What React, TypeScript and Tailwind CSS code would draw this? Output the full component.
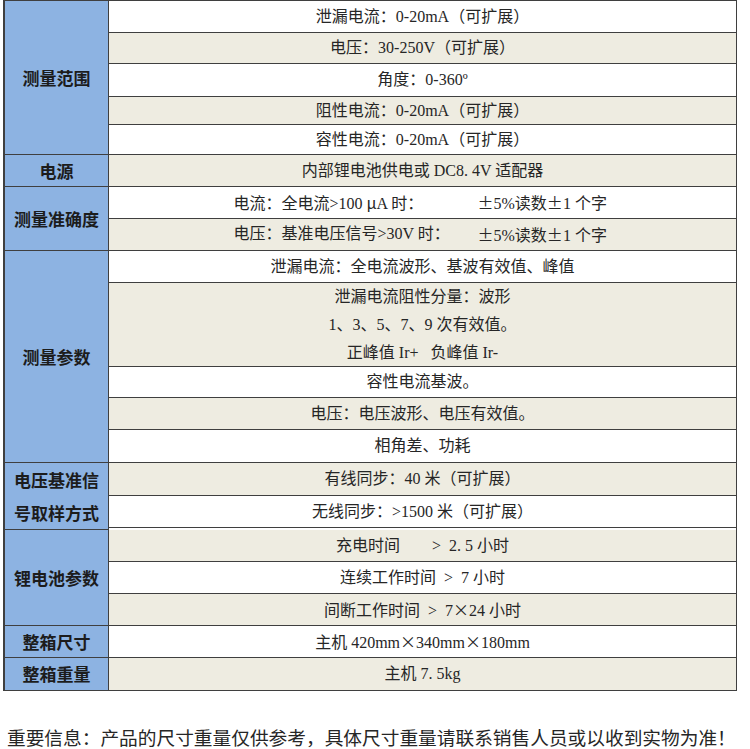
import React from "react";

type Row = { h: number; content: React.ReactNode };
type Group = { label: React.ReactNode; rows: Row[] };

const cjk = { fontFamily: '"Noto Sans CJK SC", sans-serif' };

const fmt = (t: string) =>
  t.split(/([±×μ])/).map((p, i) =>
    /^[±×μ]$/.test(p) ? (
      <span key={i} style={cjk}>
        {p}
      </span>
    ) : (
      <React.Fragment key={i}>{p}</React.Fragment>
    )
  );

const C = (t: string) => <span className="whitespace-pre">{fmt(t)}</span>;

const acc = (a: string, b: string) => (
  <div className="flex w-[378px] whitespace-pre">
    <span className="w-[244px]">{fmt(a)}</span>
    <span>{fmt(b)}</span>
  </div>
);

const groups: Group[] = [
  {
    label: "测量范围",
    rows: [
      { h: 32, content: C("泄漏电流：0-20mA（可扩展）") },
      { h: 31, content: C("电压：30-250V（可扩展）") },
      { h: 33, content: C("角度：0-360º") },
      { h: 28, content: C("阻性电流：0-20mA（可扩展）") },
      { h: 30, content: C("容性电流：0-20mA（可扩展）") },
    ],
  },
  {
    label: "电源",
    rows: [{ h: 32, content: C("内部锂电池供电或 DC8. 4V 适配器") }],
  },
  {
    label: "测量准确度",
    rows: [
      { h: 32, content: acc("电流：全电流>100 μA 时：", "±5%读数±1 个字") },
      { h: 32, content: acc("电压：基准电压信号>30V 时：", "±5%读数±1 个字") },
    ],
  },
  {
    label: "测量参数",
    rows: [
      { h: 32, content: C("泄漏电流：全电流波形、基波有效值、峰值") },
      {
        h: 84,
        content: (
          <div className="flex flex-col items-center leading-[28px]">
            <span className="whitespace-pre">泄漏电流阻性分量：波形</span>
            <span className="whitespace-pre">1、3、5、7、9 次有效值。</span>
            <span className="whitespace-pre">正峰值 Ir+   负峰值 Ir-</span>
          </div>
        ),
      },
      { h: 31, content: C("容性电流基波。") },
      { h: 32, content: C("电压：电压波形、电压有效值。") },
      { h: 33, content: C("相角差、功耗") },
    ],
  },
  {
    label: (
      <div className="flex flex-col items-center leading-[33px]">
        <span>电压基准信</span>
        <span>号取样方式</span>
      </div>
    ),
    rows: [
      { h: 33, content: C("有线同步：40 米（可扩展）") },
      { h: 32, content: C("无线同步：>1500 米（可扩展）") },
    ],
  },
  {
    label: "锂电池参数",
    rows: [
      { h: 32, content: C("充电时间        >  2. 5 小时") },
      { h: 32, content: C("连续工作时间  >  7 小时") },
      { h: 32, content: C("间断工作时间  >  7×24 小时") },
    ],
  },
  {
    label: "整箱尺寸",
    rows: [{ h: 32, content: C("主机 420mm×340mm×180mm") }],
  },
  {
    label: "整箱重量",
    rows: [{ h: 33, content: C("主机 7. 5kg") }],
  },
];

const heightClass: Record<number, string> = {
  28: "h-[28px]",
  30: "h-[30px]",
  31: "h-[31px]",
  32: "h-[32px]",
  33: "h-[33px]",
  84: "h-[84px]",
};

export default function App() {
  let idx = 0;
  return (
    <div className="w-[750px] h-[749px] bg-white overflow-hidden">
      <div className="ml-[3px] w-[734px] border-t border-l-2 border-r border-[#3f3f3f] flex flex-col">
        {groups.map((g, gi) => (
          <div key={gi} className="flex">
            <div
              className="w-[104px] shrink-0 bg-[#8db3e2] border-r border-b border-[#3f3f3f] flex items-center justify-center text-[17px] font-bold text-[#1c1c1c]"
              style={{ fontFamily: '"Noto Sans CJK SC", "Noto Sans", sans-serif' }}
            >
              {g.label}
            </div>
            <div className="flex-1 flex flex-col">
              {g.rows.map((r, ri) => {
                const bg = idx++ % 2 === 0 ? "bg-white" : "bg-[#eeece1]";
                return (
                  <div
                    key={ri}
                    className={`${heightClass[r.h]} ${bg} border-b border-[#3f3f3f] flex items-center justify-center text-[16px] text-[#262626]`}
                    style={{ fontFamily: '"Liberation Serif", "Noto Sans CJK SC", serif' }}
                  >
                    {r.content}
                  </div>
                );
              })}
            </div>
          </div>
        ))}
      </div>
      <div
        className="mt-[36px] ml-[7px] text-[18.7px] leading-[24px] text-[#262626] whitespace-nowrap"
        style={{ fontFamily: '"Liberation Serif", "Noto Sans CJK SC", serif' }}
      >
        重要信息：产品的尺寸重量仅供参考，具体尺寸重量请联系销售人员或以收到实物为准！
      </div>
    </div>
  );
}
